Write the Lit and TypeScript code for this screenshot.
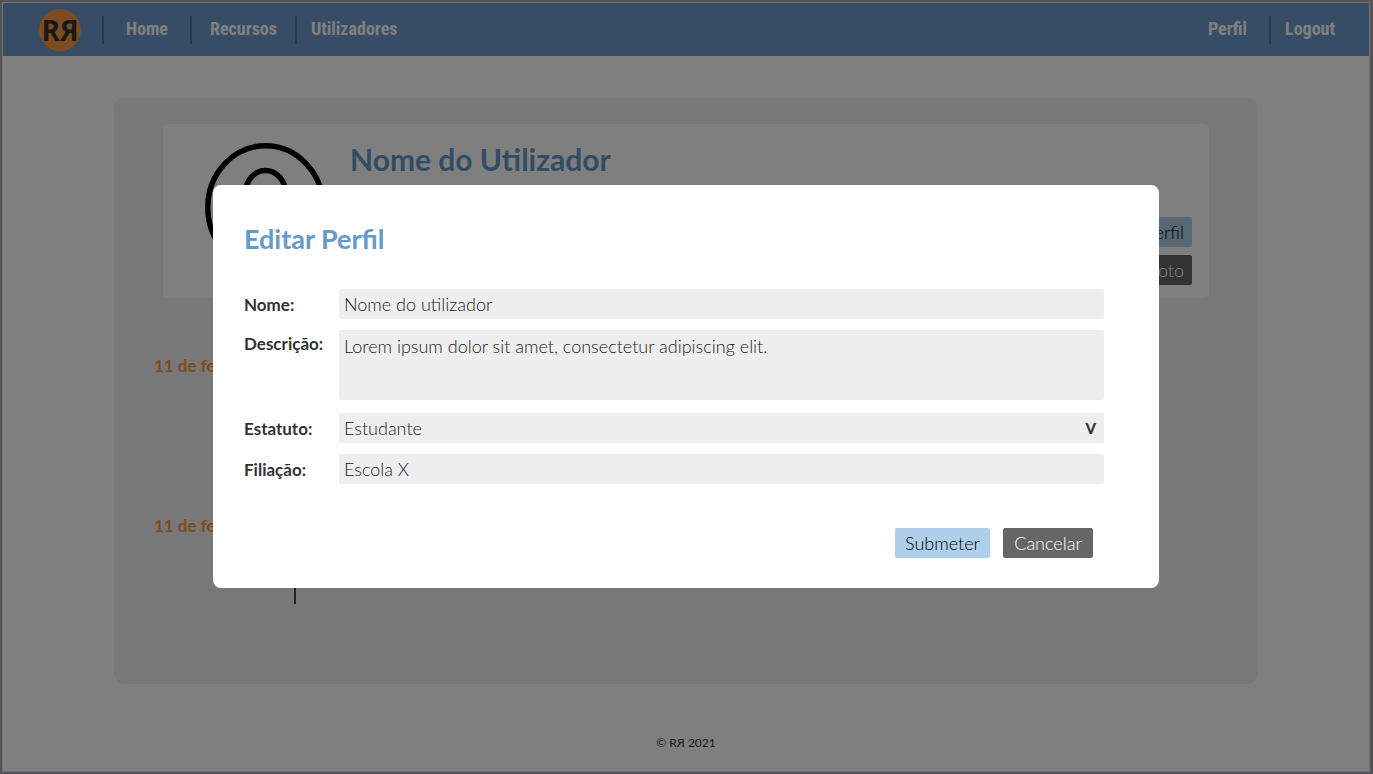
import { LitElement, html, css } from "lit";
import { customElement, property, state } from "lit/decorators.js";

@customElement("site-header")
class SiteHeader extends LitElement {
  static styles = css`
    :host { display: block; }
    .bar {
      display: flex;
      align-items: center;
      height: 53px;
      padding: 0 34px 0 36px;
      box-sizing: border-box;
      background: #6c9bca;
      font: bold 18px/26px "Roboto Condensed", "Roboto", sans-serif;
    }
    .logo {
      display: flex;
      align-items: center;
      justify-content: center;
      width: 42px;
      height: 42px;
      margin-right: 21px;
      border-radius: 50%;
      background: #ff9944;
      color: #333;
      font: bold 28px/42px "Open Sans", sans-serif;
      text-decoration: none;
    }
    nav { display: flex; }
    .end { margin-left: auto; }
    .link {
      padding: 0 18px 2px;
      border-left: 2px solid #5b7089;
      color: #fff;
      text-decoration: none;
    }
    .wide { padding: 0 22px 2px; }
    .slim { padding: 0 0 2px 14px; }
    .plain { border-left: 0; padding: 0 22px 2px 0; }
  `;
  render() {
    return html`
      <header class="bar">
        <a class="logo" href="#" aria-label="Início">RЯ</a>
        <nav>
          <a class="link wide" href="#">Home</a>
          <a class="link" href="#">Recursos</a>
          <a class="link slim" href="#">Utilizadores</a>
        </nav>
        <nav class="end">
          <a class="link plain" href="#">Perfil</a>
          <a class="link slim" href="#">Logout</a>
        </nav>
      </header>
    `;
  }
}

@customElement("profile-page")
class ProfilePage extends LitElement {
  @property({ type: Array }) dates: string[] = ["11 de fevereiro", "11 de fevereiro"];

  static styles = css`
    :host { display: block; padding: 42px 111px 0; }
    .panel {
      min-height: 586px;
      padding: 26px 49px 0;
      box-sizing: border-box;
      border-radius: 10px;
      background: #f0f0f0;
    }
    .card {
      display: flex;
      gap: 25px;
      height: 174px;
      padding: 19px 17px 13px 42px;
      box-sizing: border-box;
      border-radius: 5px;
      background: #fff;
    }
    .avatar { flex: none; width: 120px; height: 129px; }
    .name {
      flex: 1;
      margin: 0;
      color: #6699cc;
      font: bold 30px/32px "Lato", sans-serif;
    }
    .actions { display: flex; flex-direction: column; gap: 8px; justify-content: flex-end; }
    .button {
      height: 30px;
      padding: 0 8px;
      border: 0;
      border-radius: 2px;
      background: #aecee9;
      color: #000;
      font: 300 18px/30px "Lato", sans-serif;
      text-align: right;
    }
    .dark { background: #666; color: #fff; }
    .timeline { margin: 55px 0 0; padding: 0; list-style: none; }
    .entry { display: flex; height: 160px; }
    .date {
      width: 140px;
      margin-left: -9px;
      color: #ff9944;
      white-space: nowrap;
      font: bold 17px/26px "Lato", sans-serif;
    }
    .line { width: 2px; height: 91px; background: #444; }
  `;
  render() {
    return html`
      <main class="panel">
        <section class="card">
          <svg class="avatar" viewBox="0 0 120 129" fill="none" stroke="#000" stroke-width="5.5" aria-hidden="true">
            <ellipse cx="60.5" cy="64.5" rx="57.7" ry="61.7"></ellipse>
            <ellipse cx="60.5" cy="50" rx="20" ry="22.5"></ellipse>
            <path d="M23 110C25 86 41 80 60 80s35 6 37 30"></path>
          </svg>
          <h1 class="name">Nome do Utilizador</h1>
          <div class="actions">
            <button class="button">Editar Perfil</button>
            <button class="button dark">Alterar Foto</button>
          </div>
        </section>
        <ul class="timeline">
          ${this.dates.map((d) => html`<li class="entry"><time class="date">${d}</time><span class="line"></span></li>`)}
        </ul>
      </main>
    `;
  }
}

@customElement("edit-profile-form")
class EditProfileForm extends LitElement {
  @state() private description = "Lorem ipsum dolor sit amet, consectetur adipiscing elit.";

  static styles = css`
    :host { display: block; width: 100%; }
    .dialog {
      padding: 36px 55px 30px 31px;
      border-radius: 8px;
      background: #fff;
      font-family: "Lato", sans-serif;
    }
    .title { margin: 0 0 33px; color: #6699cc; font-size: 27px; line-height: 35px; }
    .fields { display: grid; grid-template-columns: 95px 1fr; row-gap: 11px; }
    .label { height: 30px; color: #333; font-size: 17px; font-weight: bold; line-height: 32px; }
    .label.top { line-height: 28px; }
    .field {
      width: 100%;
      height: 30px;
      padding: 0 5px;
      box-sizing: border-box;
      border: 0;
      border-radius: 2px;
      outline: 0;
      background: #eee;
      color: #222;
      font: 300 18px/30px "Lato", sans-serif;
      appearance: none;
    }
    .area { display: block; height: 70px; margin-bottom: 2px; padding: 1px 5px; resize: none; }
    .choice { display: grid; height: 30px; }
    .choice > * { grid-area: 1 / 1; }
    .arrow {
      justify-self: end;
      padding-right: 8px;
      color: #333;
      font-size: 15px;
      font-weight: 900;
      line-height: 30px;
      pointer-events: none;
    }
    .actions { display: flex; justify-content: flex-end; gap: 13px; padding: 44px 11px 0 0; }
    .button {
      min-width: 90px;
      height: 30px;
      padding: 0 10px;
      border: 0;
      border-radius: 2px;
      background: #aecee9;
      color: #000;
      font: 300 18px/30px "Lato", sans-serif;
    }
    .dark { background: #666; color: #fff; }
  `;
  render() {
    return html`
      <form class="dialog" role="dialog" aria-labelledby="title" @submit=${(e: Event) => e.preventDefault()}>
        <h2 class="title" id="title">Editar Perfil</h2>
        <div class="fields">
          <label class="label" for="name">Nome:</label>
          <input class="field" id="name" type="text" value="Nome do utilizador">
          <label class="label top" for="description">Descrição:</label>
          <textarea class="field area" id="description" .value=${this.description}></textarea>
          <label class="label" for="status">Estatuto:</label>
          <div class="choice">
            <select class="field" id="status"><option>Estudante</option></select>
            <span class="arrow" aria-hidden="true">V</span>
          </div>
          <label class="label" for="affiliation">Filiação:</label>
          <input class="field" id="affiliation" type="text" value="Escola X">
        </div>
        <div class="actions">
          <button class="button" type="submit">Submeter</button>
          <button class="button dark" type="button">Cancelar</button>
        </div>
      </form>
    `;
  }
}

@customElement("app-root")
class AppRoot extends LitElement {
  static styles = css`
    :host {
      display: block;
      box-sizing: border-box;
      border: 2px solid #a8a8ac;
      border-right-width: 3px;
    }
    .page {
      display: flex;
      flex-direction: column;
      min-height: calc(100vh - 4px);
      box-sizing: border-box;
      border: 1px solid #e6e6e6;
      background: #fff;
    }
    .footer {
      padding-top: 49px;
      color: #333;
      font: 12px/20px "Lato", "Open Sans", sans-serif;
      text-align: center;
    }
    .overlay {
      position: fixed;
      inset: 0;
      display: flex;
      align-items: center;
      padding: 0 214px 2px 213px;
      background: rgba(0, 0, 0, 0.5);
    }
  `;
  render() {
    return html`
      <div class="page">
        <site-header></site-header>
        <profile-page></profile-page>
        <footer class="footer">© RЯ 2021</footer>
      </div>
      <div class="overlay"><edit-profile-form></edit-profile-form></div>
    `;
  }
}
